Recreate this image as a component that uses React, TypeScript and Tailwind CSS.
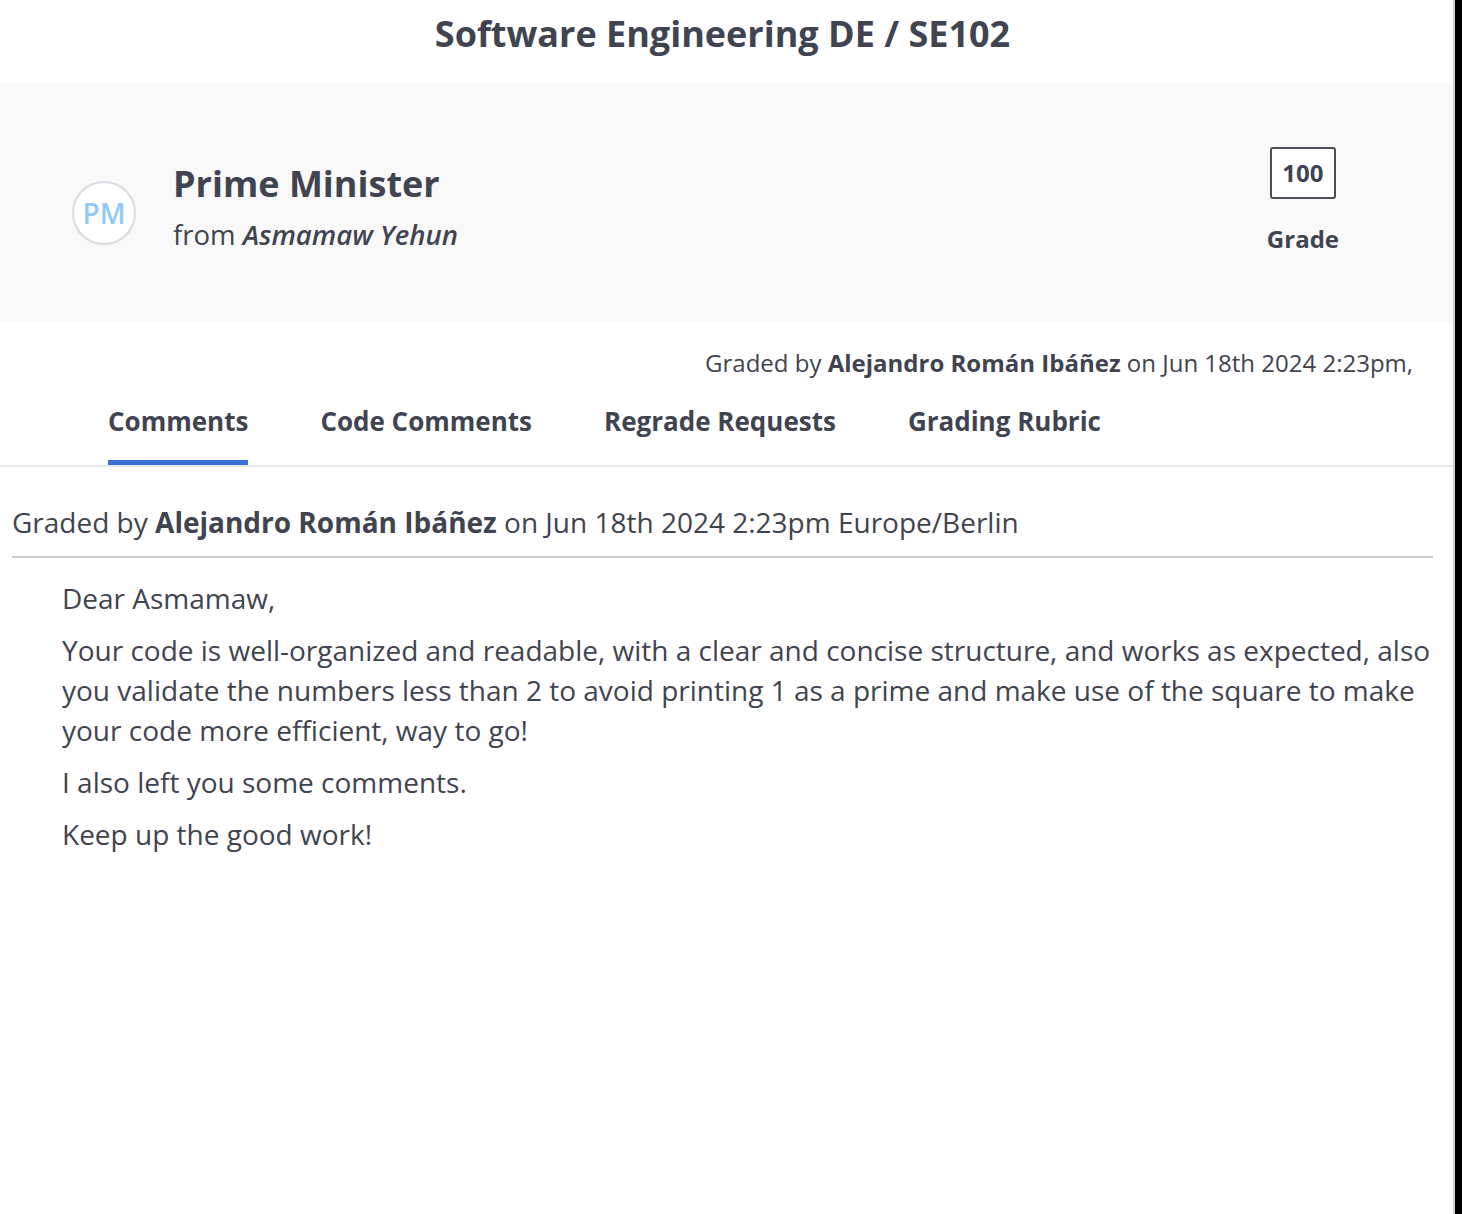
import React from 'react';

const tabs = ['Comments', 'Code Comments', 'Regrade Requests', 'Grading Rubric'];

export default function App() {
  return (
    <div className="flex h-[1214px] w-[1462px] bg-black font-['Open_Sans',sans-serif] text-[#3f4450]">
      <div className="flex w-[1453px] flex-col bg-white">
        {/* Title */}
        <div className="flex h-[83px] items-center justify-center pb-[16px] pr-[8px]">
          <h1 className="text-[36px] font-bold">Software Engineering DE / SE102</h1>
        </div>

        {/* Submission header */}
        <div className="flex h-[239px] items-start bg-[#f9f9f9] pl-[72px] pr-[114px]">
          <div className="mt-[98px] flex h-[64px] w-[64px] items-center justify-center rounded-full border-2 border-[#d9dce4] bg-white text-[28px] font-semibold text-[#90caf9]">
            PM
          </div>
          <div className="ml-[37px] mt-[77px] flex flex-col">
            <span className="text-[36px] font-bold leading-[48px]">Prime Minister</span>
            <span className="mt-[8px] text-[27.5px] leading-[38px]">
              from <span className="font-semibold italic">Asmamaw Yehun</span>
            </span>
          </div>
          <div className="ml-auto mt-[64px] flex flex-col items-center">
            <div className="flex h-[52px] w-[66px] items-center justify-center rounded-[3px] border-2 border-[#4a4f5a] bg-white text-[24px] font-bold">
              100
            </div>
            <span className="mt-[22px] text-[24px] font-bold">Grade</span>
          </div>
        </div>

        {/* Graded by (summary) */}
        <div className="flex justify-end pr-[40px] pt-[24px] text-[24px] leading-[34px]">
          <span>
            Graded by <span className="font-bold">Alejandro Román Ibáñez</span> on Jun 18th 2024 2:23pm,
          </span>
        </div>

        {/* Tabs */}
        <div className="mt-[16px] flex gap-[72px] border-b-2 border-[#e8e9ee] pl-[108px]">
          {tabs.map((t, i) => (
            <div
              key={t}
              className={
                i === 0
                  ? 'border-b-[5px] border-[#3b6fd8] pb-[14px] text-[26px] font-bold leading-[50px]'
                  : 'border-b-[5px] border-transparent pb-[14px] text-[26px] font-bold leading-[50px]'
              }
            >
              {t}
            </div>
          ))}
        </div>

        {/* Comment */}
        <div className="pl-[12px] pr-[20px] pt-[35px]">
          <div className="border-b-2 border-[#c9ccd1] pb-[14px] text-[28px] leading-[40px]">
            Graded by <span className="font-bold">Alejandro Román Ibáñez</span> on Jun 18th 2024 2:23pm Europe/Berlin
          </div>
          <div className="flex flex-col gap-[12px] pl-[50px] pt-[20px] text-[28px] leading-[40px]">
            <p>Dear Asmamaw,</p>
            <p>
              Your code is well-organized and readable, with a clear and concise structure, and works as expected, also
              you validate the numbers less than 2 to avoid printing 1 as a prime and make use of the square to make your
              code more efficient, way to go!
            </p>
            <p>I also left you some comments.</p>
            <p>Keep up the good work!</p>
          </div>
        </div>
      </div>
      <div className="w-[2px] bg-[#cfcfcf]" />
    </div>
  );
}
